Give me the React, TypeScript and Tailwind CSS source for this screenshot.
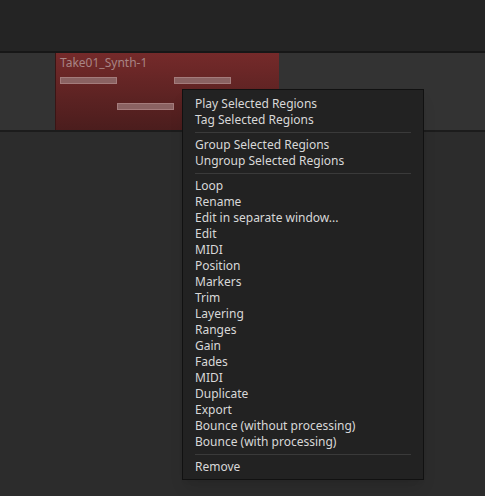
const groups: string[][] = [
  ["Play Selected Regions", "Tag Selected Regions"],
  ["Group Selected Regions", "Ungroup Selected Regions"],
  [
    "Loop",
    "Rename",
    "Edit in separate window...",
    "Edit",
    "MIDI",
    "Position",
    "Markers",
    "Trim",
    "Layering",
    "Ranges",
    "Gain",
    "Fades",
    "MIDI",
    "Duplicate",
    "Export",
    "Bounce (without processing)",
    "Bounce (with processing)",
  ],
  ["Remove"],
];

function RegionMenu() {
  return (
    <div className="absolute left-[182px] top-[89px] w-[242px] border border-[#111111] bg-[#222222] pt-[6px] pb-[4px] shadow-lg">
      {groups.map((items, gi) => (
        <div key={gi}>
          {gi > 0 && (
            <div className="flex h-[9px] items-center px-[12px]">
              <div className="h-px w-full bg-[#3a3a3a]" />
            </div>
          )}
          {items.map((label, i) => (
            <div
              key={i}
              className="h-[16px] pl-[12px] text-[12px] leading-[16px] text-[#d8d8d8]"
            >
              {label}
            </div>
          ))}
        </div>
      ))}
    </div>
  );
}

export default function App() {
  return (
    <div
      className="relative flex h-[496px] w-[485px] flex-col overflow-hidden bg-[#2c2c2c]"
      style={{ fontFamily: '"Noto Sans", "Open Sans", sans-serif' }}
    >
      {/* ruler / toolbar strip */}
      <div className="h-[53px] border-b-2 border-[#171717] bg-[#242424]" />

      {/* track lane */}
      <div className="flex h-[79px] border-b-2 border-[#1c1c1c] bg-[#333333]">
        <div className="ml-[55px] flex w-[224px] flex-col border-l border-[#3a1515] bg-gradient-to-b from-[#752a2a] to-[#4b1d1d] px-[4px] pt-[2px]">
          <div className="text-[12px] leading-[15px] text-[#a88484]">Take01_Synth-1</div>
          <div className="relative flex-1">
            <div className="absolute left-[0px] top-[7px] h-[7px] w-[57px] border border-[#a47c7c] bg-[#8a6262]" />
            <div className="absolute left-[114px] top-[7px] h-[7px] w-[57px] border border-[#a47c7c] bg-[#8a6262]" />
            <div className="absolute left-[57px] top-[33px] h-[7px] w-[57px] border border-[#a47c7c] bg-[#8a6262]" />
          </div>
        </div>
      </div>

      <div className="flex-1" />

      <RegionMenu />
    </div>
  );
}
